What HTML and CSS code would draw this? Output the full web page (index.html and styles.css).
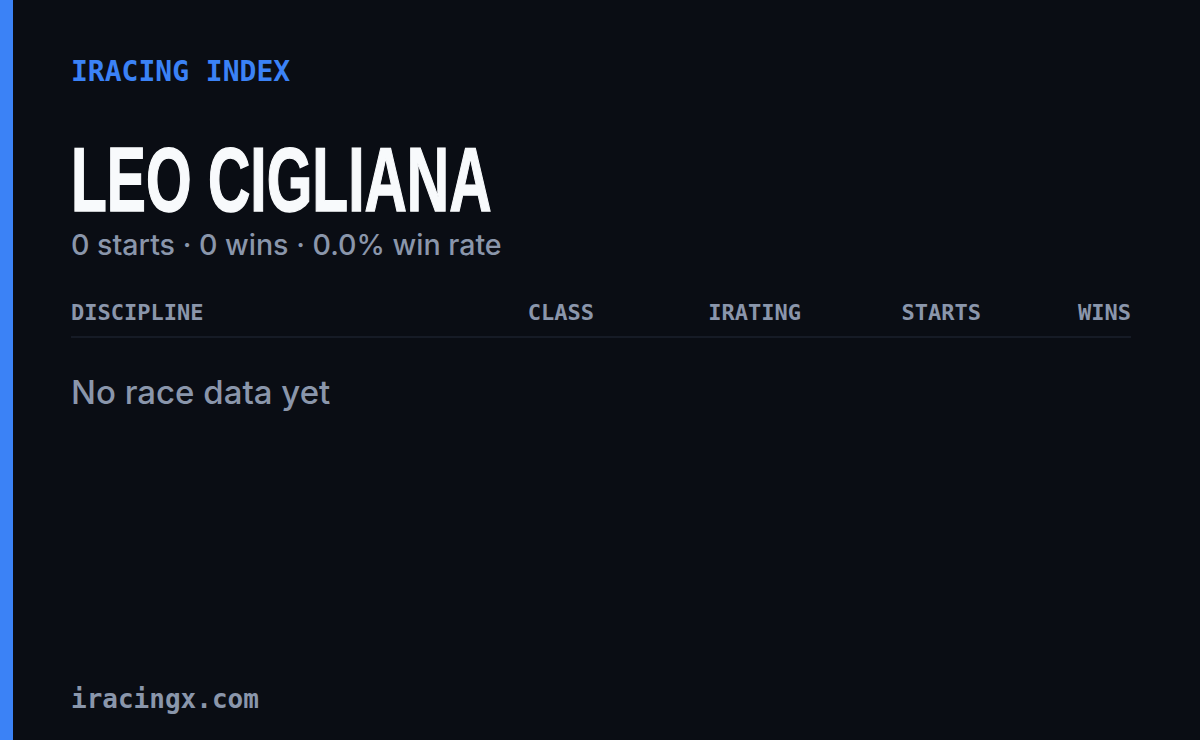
FILE: index.html
```html
<!DOCTYPE html>
<html>
<head>
<meta charset="utf-8">
<link rel="stylesheet" href="styles.css">
</head>
<body>
<div class="card">
  <div class="accent"></div>
  <main class="content">
    <div class="brand">IRACING INDEX</div>
    <h1 class="name"><span class="name-text">LEO CIGLIANA</span></h1>
    <div class="summary">0 starts · 0 wins · 0.0% win rate</div>
    <div class="table">
      <div class="thead">
        <div class="th th-left">DISCIPLINE</div>
        <div class="th">CLASS</div>
        <div class="th">IRATING</div>
        <div class="th">STARTS</div>
        <div class="th">WINS</div>
      </div>
      <div class="empty">No race data yet</div>
    </div>
    <div class="footer">iracingx.com</div>
  </main>
</div>
</body>
</html>
```

FILE: styles.css
```css
html, body {
  margin: 0;
  padding: 0;
  background: #0a0d14;
}
.card {
  width: 1200px;
  height: 740px;
  display: flex;
  background: #0a0d14;
  overflow: hidden;
}
.accent {
  width: 13px;
  flex: none;
  background: #3b82f6;
}
.content {
  flex: 1;
  display: flex;
  flex-direction: column;
  padding: 52px 69px 24px 58px;
}
.brand {
  font-family: "DejaVu Sans Mono", "Liberation Mono", monospace;
  font-weight: bold;
  font-size: 28px;
  line-height: 40px;
  color: #3b82f6;
}
.name {
  margin: 48px 0 0 0;
  font-family: "Liberation Sans", sans-serif;
  font-weight: bold;
  font-size: 91px;
  line-height: 80px;
  height: 80px;
  color: #f8fafc;
  white-space: nowrap;
}
.name-text {
  display: inline-block;
  transform-origin: left center;
  transform: scaleX(0.645);
  -webkit-text-stroke: 1.5px #f8fafc;
}
.summary {
  margin-top: 7px;
  font-family: "Inter", "Open Sans", sans-serif;
  font-weight: 500;
  font-size: 28.6px;
  line-height: 36px;
  color: #8a96ab;
}
.table {
  margin-top: 37px;
}
.thead {
  display: grid;
  grid-template-columns: 1fr 120px 207px 180px 150px;
  padding-bottom: 10px;
  border-bottom: 2px solid #161b26;
}
.th {
  font-family: "DejaVu Sans Mono", "Liberation Mono", monospace;
  font-weight: bold;
  font-size: 22px;
  line-height: 26px;
  color: #8a96ab;
  text-align: right;
}
.th-left {
  text-align: left;
}
.empty {
  margin-top: 34px;
  font-family: "Inter", "Open Sans", sans-serif;
  font-weight: 500;
  font-size: 33px;
  line-height: 40px;
  color: #8a96ab;
}
.footer {
  margin-top: auto;
  font-family: "DejaVu Sans Mono", "Liberation Mono", monospace;
  font-weight: bold;
  font-size: 26px;
  line-height: 34px;
  color: #8a96ab;
}
```
